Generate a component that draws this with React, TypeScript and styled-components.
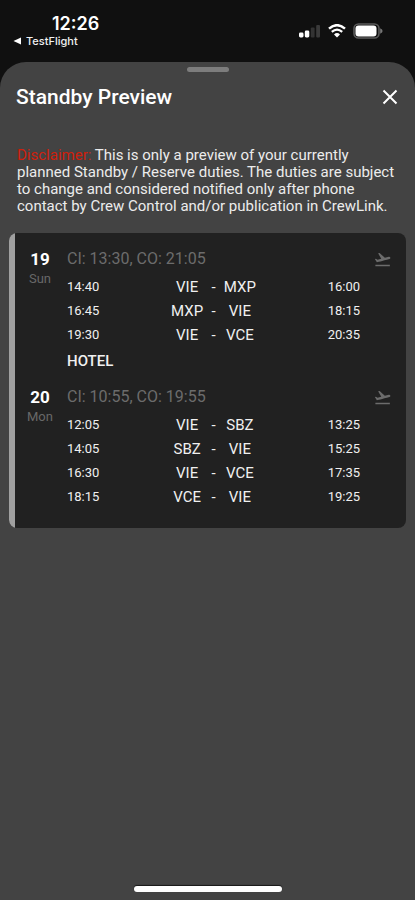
import React from "react";
import styled, { createGlobalStyle } from "styled-components";

const GlobalStyle = createGlobalStyle`
  *, *::before, *::after { box-sizing: border-box; }
  body {
    margin: 0;
    background: #101010;
    color: #f0f0f0;
    font-family: Roboto, "Liberation Sans", sans-serif;
  }
`;

const Screen = styled.div`
  min-height: 100vh;
  display: flex;
  flex-direction: column;
`;

const StatusBar = styled.div`
  display: flex;
  justify-content: space-between;
  align-items: flex-start;
  height: 62px;
  padding: 12px 32px 0 12px;
`;

const StatusLeft = styled.div`
  display: flex;
  flex-direction: column;
`;

const Clock = styled.time`
  padding-left: 40px;
  font: 600 18px/24px Inter, Roboto, sans-serif;
  color: #fff;
`;

const BackLink = styled.a`
  display: flex;
  align-items: center;
  gap: 4px;
  font: 500 11px/10px Inter, Roboto, sans-serif;
  color: #f0f0f0;
  text-decoration: none;
`;

const StatusIcons = styled.div`
  display: flex;
  align-items: center;
  gap: 7px;
  padding-top: 11px;

  svg { display: block; }
`;

const Sheet = styled.main`
  flex: 1;
  display: flex;
  flex-direction: column;
  padding-top: 5px;
  border-radius: 26px 26px 0 0;
  background: #434343;
`;

const Grabber = styled.div`
  width: 42px;
  height: 5px;
  margin: 0 auto;
  border-radius: 3px;
  background: #7d7d7d;
`;

const SheetHeader = styled.header`
  display: flex;
  align-items: center;
  justify-content: space-between;
  height: 50px;
  padding: 0 16px;
`;

const Title = styled.h1`
  margin: 0;
  font-size: 21px;
  line-height: 26px;
  font-weight: 500;
  color: #fff;
`;

const CloseButton = styled.button`
  display: flex;
  padding: 0;
  border: 0;
  background: none;
  color: #fff;
  cursor: pointer;
`;

const Disclaimer = styled.p`
  margin: 25px 16px 0 17px;
  font-size: 15px;
  line-height: 17px;
  color: #ececec;
`;

const Warning = styled.span`
  color: #cf1f0c;
`;

const DutyCard = styled.section`
  display: flex;
  margin: 18px 9px 0;
  border-radius: 8px;
  overflow: hidden;
  background: #212121;
`;

const CardStripe = styled.div`
  flex: none;
  width: 6px;
  background: #a0a0a0;
`;

const DutyList = styled.div`
  flex: 1;
  display: flex;
  flex-direction: column;
  gap: 5px;
  padding: 9px 15px 19px 0;
`;

const Duty = styled.article`
  display: grid;
  grid-template-columns: 50px 1fr;
  column-gap: 2px;
`;

const DateColumn = styled.div`
  display: flex;
  flex-direction: column;
  align-items: center;
  padding-top: 7px;
`;

const DayNumber = styled.span`
  font-size: 17px;
  line-height: 20px;
  font-weight: 700;
  color: #fff;
`;

const Weekday = styled.span`
  font-size: 13px;
  line-height: 20px;
  color: #686868;
`;

const DutyHeader = styled.div`
  display: flex;
  align-items: center;
  justify-content: space-between;
  height: 33px;
  color: #6c6c6c;
`;

const DutyTimes = styled.h2`
  margin: 0;
  font-size: 16px;
  font-weight: 400;
`;

const FlightArea = styled.div`
  padding-right: 31px;
`;

const FlightTable = styled.table`
  width: 100%;
  table-layout: fixed;
  border-collapse: collapse;
`;

const Cell = styled.td<{ $kind: "start" | "airport" | "dash" | "end" }>`
  width: ${(p) => ({ start: "34%", airport: "14%", dash: "4%", end: "34%" })[p.$kind]};
  height: 24px;
  padding: 0;
  white-space: nowrap;
  text-align: ${(p) => ({ start: "left", airport: "center", dash: "center", end: "right" })[p.$kind]};
  font-size: ${(p) => (p.$kind === "start" || p.$kind === "end" ? "13px" : "15px")};
  line-height: 24px;
`;

const Hotel = styled.div`
  font-size: 15px;
  line-height: 28px;
  font-weight: 500;
`;

const HomeIndicator = styled.div`
  width: 148px;
  height: 6px;
  margin: auto auto 8px;
  border-radius: 3px;
  background: #fff;
  box-shadow: 0 -1px 1px #181818;
`;

const SignalIcon = () => (
  <svg width="22" height="14" viewBox="0 0 22 14" aria-label="Signal">
    <rect x="0" y="8.5" width="4.5" height="5" rx="1.4" fill="#fff" />
    <rect x="5.8" y="6.5" width="4.5" height="7" rx="1.4" fill="#fff" />
    <rect x="11.8" y="3.5" width="3.8" height="10" rx="1" fill="#333" />
    <rect x="17.2" y="1" width="3.8" height="12.5" rx="1" fill="#3a3a3a" />
  </svg>
);

const WifiIcon = () => (
  <svg width="18" height="14" viewBox="0 0 18 14" fill="none" aria-label="Wi-Fi">
    <path d="M1 4.6Q9-2.2 17 4.6" stroke="#fff" strokeWidth="2.5" />
    <path d="M3.8 7.8Q9 3.4 14.2 7.8" stroke="#fff" strokeWidth="2.3" />
    <path d="M6 10.5Q9 7.6 12 10.5L9 13.6Z" fill="#fff" />
  </svg>
);

const BatteryIcon = () => (
  <svg width="30" height="16" viewBox="0 0 30 16" aria-label="Battery">
    <rect x="1" y="1" width="25" height="14" rx="4.5" fill="none" stroke="#5b5b5b" strokeWidth="1.6" />
    <rect x="2.5" y="2.5" width="21" height="11" rx="3" fill="#fff" />
    <path d="M27.2 5.2Q29.6 6.2 29.6 8T27.2 10.8Z" fill="#777" />
  </svg>
);

const TakeoffIcon = () => (
  <svg width="16" height="16" viewBox="2 1 21 21" fill="currentColor" aria-label="Flight duty">
    <path d="M2.5 19h19v2h-19zm19.57-9.36c-.21-.8-1.04-1.28-1.84-1.06L14.92 10l-6.9-6.43-1.93.51 4.14 7.17-4.97 1.33-1.97-1.54-1.45.39 2.59 4.49s7.12-1.9 16.57-4.43c.81-.23 1.28-1.05 1.07-1.85z" />
  </svg>
);

type Flight = [departure: string, from: string, to: string, arrival: string];

interface DutyData {
  day: string;
  weekday: string;
  times: string;
  flights: Flight[];
  hotel?: boolean;
}

const duties: DutyData[] = [
  {
    day: "19",
    weekday: "Sun",
    times: "CI: 13:30, CO: 21:05",
    flights: [
      ["14:40", "VIE", "MXP", "16:00"],
      ["16:45", "MXP", "VIE", "18:15"],
      ["19:30", "VIE", "VCE", "20:35"],
    ],
    hotel: true,
  },
  {
    day: "20",
    weekday: "Mon",
    times: "CI: 10:55, CO: 19:55",
    flights: [
      ["12:05", "VIE", "SBZ", "13:25"],
      ["14:05", "SBZ", "VIE", "15:25"],
      ["16:30", "VIE", "VCE", "17:35"],
      ["18:15", "VCE", "VIE", "19:25"],
    ],
  },
];

export default function App() {
  return (
    <Screen>
      <GlobalStyle />
      <StatusBar>
        <StatusLeft>
          <Clock>12:26</Clock>
          <BackLink href="#">
            <svg width="10" height="8" viewBox="0 0 10 8" aria-hidden="true">
              <path d="M9 .5v7L1.5 4Z" fill="#fff" />
            </svg>
            TestFlight
          </BackLink>
        </StatusLeft>
        <StatusIcons>
          <SignalIcon />
          <WifiIcon />
          <BatteryIcon />
        </StatusIcons>
      </StatusBar>
      <Sheet>
        <Grabber />
        <SheetHeader>
          <Title>Standby Preview</Title>
          <CloseButton aria-label="Close">
            <svg width="18" height="18" viewBox="0 0 18 18" fill="none" aria-hidden="true">
              <path d="M2.5 2.5l13 13M15.5 2.5l-13 13" stroke="currentColor" strokeWidth="2" />
            </svg>
          </CloseButton>
        </SheetHeader>
        <Disclaimer>
          <Warning>Disclaimer:</Warning> This is only a preview of your currently planned Standby /
          Reserve duties. The duties are subject to change and considered notified only after phone
          contact by Crew Control and/or publication in CrewLink.
        </Disclaimer>
        <DutyCard>
          <CardStripe />
          <DutyList>
            {duties.map((duty) => (
              <Duty key={duty.day}>
                <DateColumn>
                  <DayNumber>{duty.day}</DayNumber>
                  <Weekday>{duty.weekday}</Weekday>
                </DateColumn>
                <div>
                  <DutyHeader>
                    <DutyTimes>{duty.times}</DutyTimes>
                    <TakeoffIcon />
                  </DutyHeader>
                  <FlightArea>
                    <FlightTable>
                      <tbody>
                        {duty.flights.map(([departure, from, to, arrival]) => (
                          <tr key={departure}>
                            <Cell $kind="start">{departure}</Cell>
                            <Cell $kind="airport">{from}</Cell>
                            <Cell $kind="dash">-</Cell>
                            <Cell $kind="airport">{to}</Cell>
                            <Cell $kind="end">{arrival}</Cell>
                          </tr>
                        ))}
                      </tbody>
                    </FlightTable>
                  </FlightArea>
                  {duty.hotel && <Hotel>HOTEL</Hotel>}
                </div>
              </Duty>
            ))}
          </DutyList>
        </DutyCard>
        <HomeIndicator />
      </Sheet>
    </Screen>
  );
}
